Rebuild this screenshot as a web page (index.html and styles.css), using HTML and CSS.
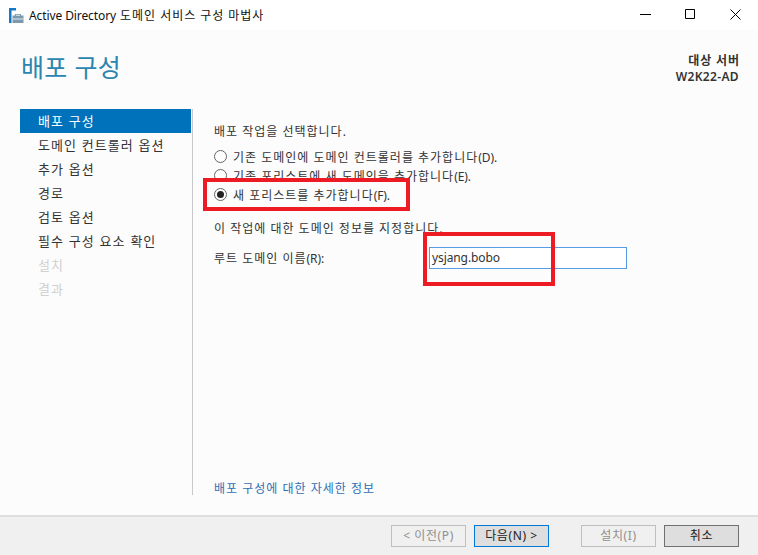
FILE: index.html
```html
<!DOCTYPE html>
<html lang="ko">
<head>
<meta charset="utf-8">
<title>Active Directory 도메인 서비스 구성 마법사</title>
<link rel="stylesheet" href="styles.css">
</head>
<body>
<div class="window">
  <header class="titlebar">
    <svg class="app-icon" width="15" height="15" viewBox="0 0 15 15">
      <path d="M0 0h7v2.500H2.500V15H0z" fill="#1479c9"/>
      <path d="M3.500 7.500h2.500V6h6v1.500h2.500V15h-11z" fill="#7d99ad"/>
      <path d="M7 6.800h4v.8H7z" fill="#fff"/>
      <path d="M3.500 10.500h11v1h-11z" fill="#dfe7ed"/>
    </svg>
    <span class="app-title"><span class="lat">Active Directory</span> 도메인 서비스 구성 마법사</span>
    <div class="win-controls">
      <svg width="11" height="11" viewBox="0 0 11 11"><path d="M0 5.500h11" stroke="#000" fill="none"/></svg>
      <svg width="11" height="11" viewBox="0 0 11 11"><path d="M.5.500h9v9h-9z" stroke="#000" fill="none"/></svg>
      <svg width="11" height="11" viewBox="0 0 11 11"><path d="M.5.500l10 10M10.500.500l-10 10" stroke="#000" fill="none"/></svg>
    </div>
  </header>

  <div class="page-head">
    <h1 class="page-title">배포 구성</h1>
    <div class="target">
      <div>대상 서버</div>
      <div class="target-name">W2K22-AD</div>
    </div>
  </div>

  <main class="body">
    <nav class="nav">
      <div class="nav-item active">배포 구성</div>
      <div class="nav-item">도메인 컨트롤러 옵션</div>
      <div class="nav-item">추가 옵션</div>
      <div class="nav-item">경로</div>
      <div class="nav-item">검토 옵션</div>
      <div class="nav-item">필수 구성 요소 확인</div>
      <div class="nav-item disabled">설치</div>
      <div class="nav-item disabled">결과</div>
    </nav>
    <section class="content">
      <p class="prompt">배포 작업을 선택합니다.</p>
      <div class="radios">
        <div class="radio-row"><span class="radio"></span><span>기존 도메인에 도메인 컨트롤러를 추가합니다<span class="lat">(D).</span></span></div>
        <div class="radio-row"><span class="radio"></span><span>기존 포리스트에 새 도메인을 추가합니다<span class="lat">(E).</span></span></div>
        <div class="radio-row"><span class="radio checked"></span><span>새 포리스트를 추가합니다<span class="lat">(F).</span></span></div>
      </div>
      <p class="info">이 작업에 대한 도메인 정보를 지정합니다.</p>
      <div class="field">
        <span class="field-label">루트 도메인 이름<span class="lat">(R):</span></span>
        <div class="input">ysjang.bobo</div>
      </div>
      <a class="more">배포 구성에 대한 자세한 정보</a>
    </section>
  </main>

  <footer class="footer">
    <div class="btn off">&lt; 이전(P)</div>
    <div class="btn focus">다음(N) &gt;</div>
    <div class="btn off gap">설치(I)</div>
    <div class="btn strong">취소</div>
  </footer>

  <div class="mark mark-radio"></div>
  <div class="mark mark-input"></div>
</div>
</body>
</html>
```
FILE: styles.css
```css
* { box-sizing: border-box; }
html, body { margin: 0; padding: 0; }
body {
  font-family: "Noto Sans", "Noto Sans CJK KR", sans-serif;
  font-size: 13px;
  color: #333;
}
.lat { letter-spacing: -.1px; word-spacing: 0; }
.window {
  position: relative;
  width: 758px;
  height: 555px;
  display: flex;
  flex-direction: column;
  background: #fcfcfc;
  overflow: hidden;
}
.titlebar {
  height: 30px;
  flex: none;
  background: #fff;
  display: flex;
  align-items: center;
  padding-left: 9px;
  color: #111;
}
.app-icon { margin-right: 5px; }
.app-title { font-size: 12px; letter-spacing: .96px; }
.win-controls {
  margin-left: auto;
  margin-bottom: 1px;
  display: flex;
  gap: 34px;
  padding-right: 17px;
}
.page-head {
  height: 79px;
  flex: none;
  display: flex;
  justify-content: space-between;
  padding: 0 19px 0 21px;
}
.page-title {
  margin: 17px 0 0;
  font-size: 25px;
  line-height: 40px;
  font-weight: 400;
  color: #2a86b0;
  letter-spacing: .3px;
}
.target {
  margin-top: 23px;
  text-align: right;
  font-size: 12px;
  line-height: 16px;
  font-weight: 600;
  color: #333;
  letter-spacing: .9px;
  margin-right: -1px;
}
.target-name { letter-spacing: .35px; margin-right: 1px; }
.body {
  flex: 1;
  display: flex;
  min-height: 0;
}
.nav {
  width: 173px;
  margin-left: 20px;
  height: 386px;
  border-right: 1px solid #c9c9c9;
  padding-right: 1px;
  flex: none;
}
.nav-item {
  height: 24px;
  line-height: 24px;
  padding-left: 18px;
  letter-spacing: 1px;
  word-spacing: .5px;
  color: #333;
}
.nav-item.active { background: #0072bc; color: #fff; }
.nav-item.disabled { color: #d0d0d0; }
.content {
  flex: 1;
  padding-left: 21px;
  position: relative;
  display: flex;
  flex-direction: column;
  font-size: 12px;
  letter-spacing: 1px;
}
.prompt { margin: 14px 0 0; line-height: 18px; }
.radios { margin-top: 6px; }
.radio-row {
  height: 19px;
  display: flex;
  align-items: center;
  white-space: nowrap;
}
.radio {
  width: 13px;
  height: 13px;
  border: 1px solid #666;
  border-radius: 50%;
  background: #fff;
  margin: 0 6px 0 0;
  flex: none;
  position: relative;
}
.radio.checked::after {
  content: "";
  position: absolute;
  left: 2px;
  top: 2px;
  width: 7px;
  height: 7px;
  border-radius: 50%;
  background: #222;
}
.info { margin: 16px 0 0; line-height: 18px; }
.field {
  margin-top: 9px;
  display: flex;
  align-items: center;
}
.field-label { width: 215px; flex: none; }
.input {
  width: 198px;
  height: 22px;
  border: 1px solid #569de5;
  background: #fff;
  line-height: 20px;
  padding-left: 2px;
  font-size: 12px;
  letter-spacing: -.1px;
}
.more {
  margin-top: auto;
  margin-bottom: 18px;
  line-height: 16px;
  color: #2f6fb5;
}
.footer {
  height: 40px;
  flex: none;
  background: #f0f0f0;
  border-top: 2px solid #dfdfdf;
  display: flex;
  align-items: center;
  justify-content: flex-end;
  gap: 8px;
  padding: 0 19px 0 0;
}
.btn {
  width: 75px;
  height: 22px;
  border: 1px solid #adadad;
  background: #e1e1e1;
  font-size: 12px;
  line-height: 20px;
  text-align: center;
  letter-spacing: .6px;
  color: #222;
}
.btn.off { background: #f0f0f0; border-color: #bfbfbf; color: #8f8f8f; }
.btn.gap { margin-left: 24px; }
.btn.focus { border-color: #0078d7; background: #dedede; }
.btn.strong { border-color: #707070; background: #dedede; }
.mark {
  position: absolute;
  border: 4px solid #ed1c24;
  pointer-events: none;
}
.mark-radio { left: 203px; top: 178px; width: 207px; height: 33px; }
.mark-input { left: 423px; top: 232px; width: 132px; height: 54px; }
```
